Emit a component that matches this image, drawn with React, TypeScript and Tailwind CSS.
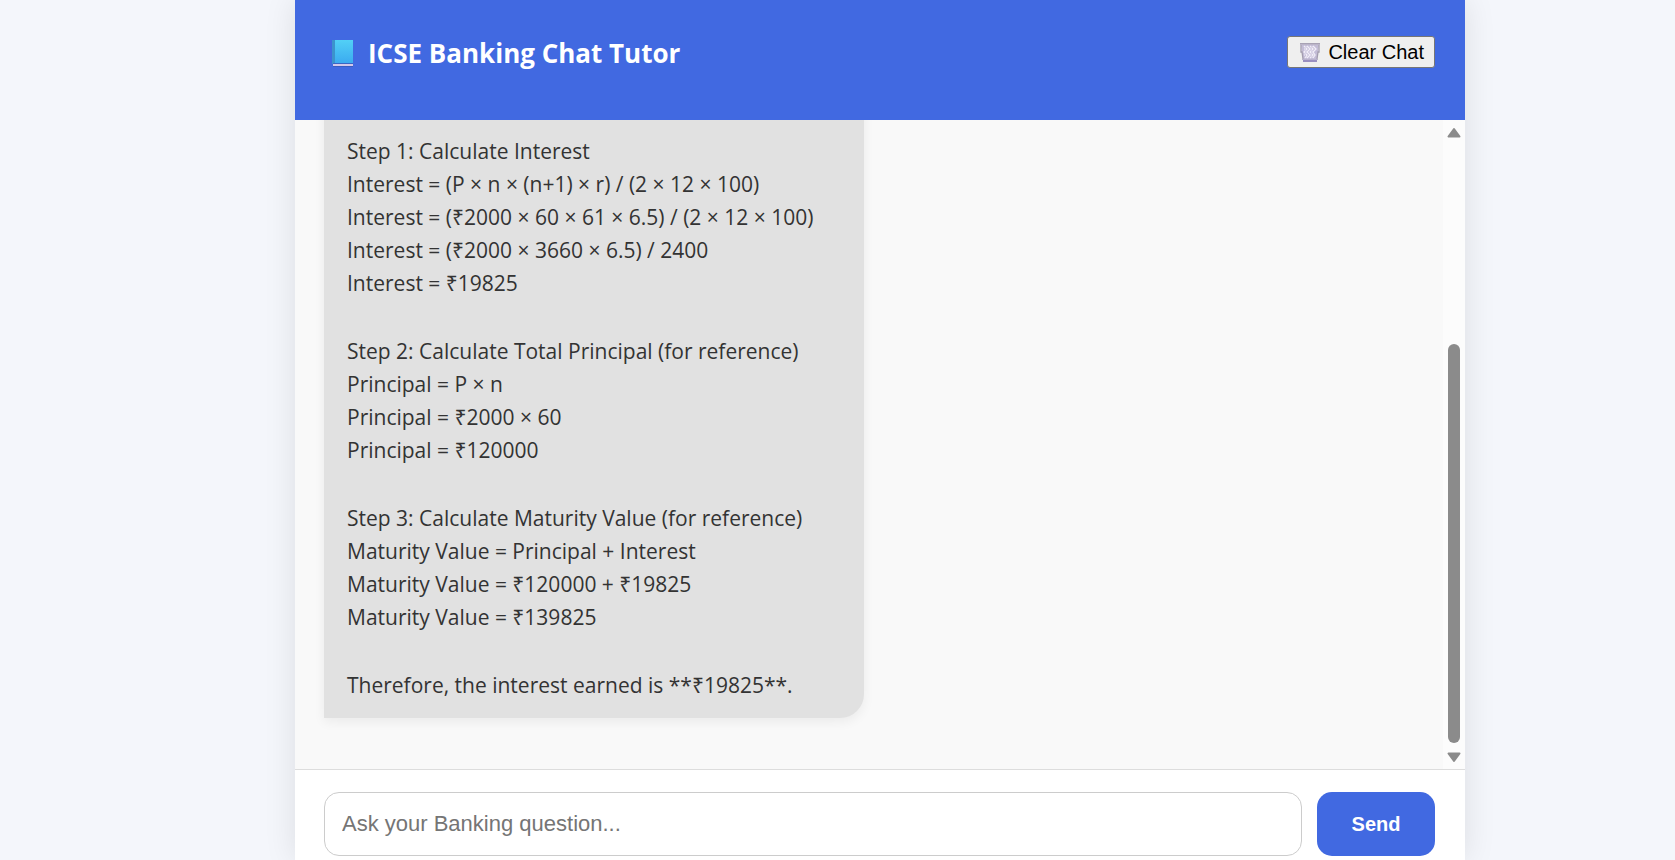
const steps: string[][] = [
  [
    "Step 1: Calculate Interest",
    "Interest = (P × n × (n+1) × r) / (2 × 12 × 100)",
    "Interest = (₹2000 × 60 × 61 × 6.5) / (2 × 12 × 100)",
    "Interest = (₹2000 × 3660 × 6.5) / 2400",
    "Interest = ₹19825",
  ],
  [
    "Step 2: Calculate Total Principal (for reference)",
    "Principal = P × n",
    "Principal = ₹2000 × 60",
    "Principal = ₹120000",
  ],
  [
    "Step 3: Calculate Maturity Value (for reference)",
    "Maturity Value = Principal + Interest",
    "Maturity Value = ₹120000 + ₹19825",
    "Maturity Value = ₹139825",
  ],
  ["Therefore, the interest earned is **₹19825**."],
];

function BookIcon() {
  return (
    <svg viewBox="0 0 22 27" className="h-[27px] w-[22px]" aria-hidden="true">
      <defs>
        <linearGradient id="cover" x1="0" y1="0" x2="0" y2="1">
          <stop offset="0" stopColor="#52d0f6" />
          <stop offset="1" stopColor="#3aa9f0" />
        </linearGradient>
      </defs>
      <rect x="0" y="0" width="21" height="24" fill="url(#cover)" />
      <rect x="0" y="0" width="3" height="24" fill="#3c93cc" />
      <rect x="1" y="23" width="20" height="1" fill="#3a66c4" />
      <rect x="1" y="24" width="20" height="2" fill="#d3c8ea" />
      <rect x="1" y="26" width="20" height="1" fill="#3a5cc0" />
    </svg>
  );
}

function TrashIcon() {
  return (
    <svg viewBox="0 0 20 20" className="h-5 w-5" aria-hidden="true">
      <path d="M1 2h18l-2 15H3z" fill="#c3bcd6" />
      <path
        d="M4 4l3 3-3 3 3 3-2 3M7 4l3 3-3 3 3 3-3 3M10 4l3 3-3 3 3 3-3 3M13 4l3 3-3 3 2 3-2 3"
        fill="none"
        stroke="#f1eef8"
        strokeWidth="1.3"
      />
      <path
        d="M7 4L4 7l3 3-3 3 3 3M13 4l-3 3 3 3-3 3 3 3"
        fill="none"
        stroke="#ddd8ea"
        strokeWidth="1"
      />
      <path d="M1 3v7h1l1 7M19 3v7h-1l-1 7" fill="none" stroke="#a39daf" strokeWidth="1.3" />
      <rect x="0" y="1" width="20" height="1" fill="#a8a2b4" />
      <rect x="0" y="2" width="20" height="1" fill="#bbb5c8" />
      <rect x="2" y="17" width="16" height="1" fill="#b9b2cc" />
      <rect x="3" y="18" width="14" height="2" fill="#9a8fc0" />
    </svg>
  );
}

function Arrow({ down = false }: { down?: boolean }) {
  return (
    <svg viewBox="0 0 14 11" className="h-[11px] w-[14px] shrink-0" aria-hidden="true">
      <path
        d={down ? "M1.5 1.5h11L7 9z" : "M1.5 9.5h11L7 2z"}
        fill="#8b8b8b"
        stroke="#8b8b8b"
        strokeWidth="2"
        strokeLinejoin="round"
      />
    </svg>
  );
}

export default function App() {
  return (
    <div className="h-screen overflow-hidden bg-[#f4f6fb] pl-[85px] font-['Open_Sans','Noto_Sans',sans-serif]">
      <main className="mx-auto flex h-full max-w-[1170px] flex-col bg-white shadow-[0_0_30px_rgba(0,0,0,0.1)]">
        <header className="flex h-[120px] shrink-0 items-start justify-between bg-[#4169e1] px-[30px] pt-9">
          <h1 className="flex items-center gap-[14px] pl-[7px] text-[26px] leading-[34px] font-bold text-white">
            <BookIcon />
            ICSE Banking Chat Tutor
          </h1>
          <button
            type="button"
            className="flex h-8 items-center gap-2 rounded-[3px] border border-[#767676] bg-[#efefef] pr-2.5 pl-3 font-['Liberation_Sans',sans-serif] text-[20px] text-black"
          >
            <TrashIcon />
            Clear Chat
          </button>
        </header>

        <div className="flex min-h-0 flex-1 bg-[#f9f9f9]">
          <section
            aria-label="Conversation"
            className="flex min-h-0 flex-1 flex-col-reverse overflow-hidden px-[29px] pb-[51px]"
          >
            <article className="flex w-[540px] max-w-full shrink-0 flex-col gap-[35px] rounded-br-[24px] bg-[#e1e1e1] px-[23px] pt-10 pb-4 text-[21px] leading-[33px] text-[#333] shadow-[0_4px_12px_rgba(0,0,0,0.06)]">
              {steps.map((lines) => (
                <div key={lines[0]}>
                  {lines.map((line) => (
                    <p key={line}>{line}</p>
                  ))}
                </div>
              ))}
            </article>
          </section>
          <div className="flex w-[22px] shrink-0 flex-col items-center bg-[#fcfcfc] pt-[7px] pb-[6px]">
            <Arrow />
            <div className="flex w-3 flex-1 flex-col justify-end py-[9px]">
              <div className="h-[67%] rounded-full bg-[#8b8b8b]" />
            </div>
            <Arrow down />
          </div>
        </div>

        <form
          className="flex shrink-0 gap-[15px] border-t border-[#ddd] bg-white pt-[22px] pr-[30px] pb-1 pl-[29px] font-['Liberation_Sans',sans-serif]"
          onSubmit={(event) => event.preventDefault()}
        >
          <input
            type="text"
            aria-label="Ask your Banking question"
            placeholder="Ask your Banking question..."
            className="h-16 min-w-0 flex-1 rounded-[15px] border border-[#ccc] bg-white px-[17px] text-[22px] text-[#333] placeholder:text-[#757575]"
          />
          <button
            type="submit"
            className="h-16 w-[118px] rounded-[15px] bg-[#4169e1] text-[20px] font-bold text-white"
          >
            Send
          </button>
        </form>
      </main>
    </div>
  );
}
